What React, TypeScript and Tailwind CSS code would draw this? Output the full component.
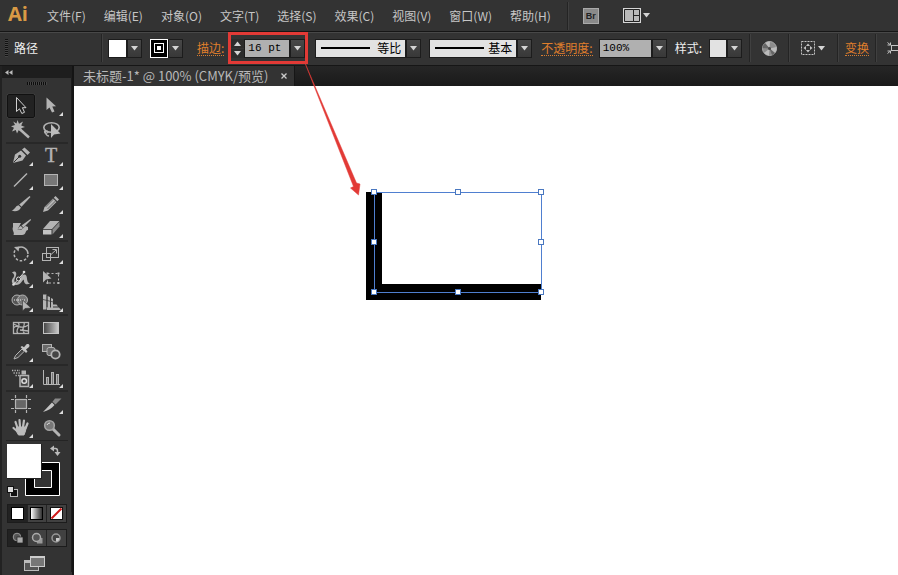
import type { ReactNode } from "react";

const menus = ["文件(F)", "编辑(E)", "对象(O)", "文字(T)", "选择(S)", "效果(C)", "视图(V)", "窗口(W)", "帮助(H)"];

const G = "#b4b4b4";

type Tool = { name: string; more?: boolean; active?: boolean; icon: ReactNode };

const cursor = "M0 0V12.5L3 10L5.500 15L8 14L5.800 9L9.500 8.800Z";

const groups: Tool[][] = [
  [
    {
      name: "选择工具",
      active: true,
      icon: <path d="M10.500 3.500V17.500L13.500 14.800L15.800 19.500L18.500 18.300L16.400 13.700H20Z" fill="#1f1f1f" stroke="#d0d0d0" />,
    },
    { name: "直接选择工具", more: true, icon: <path d={cursor} transform="translate(10.500 3.500)" fill={G} /> },
    {
      name: "魔棒工具",
      icon: (
        <g fill={G}>
          <path d="M11.500 2L13 5.800L17 3.600L15.200 7.500L19 9L15.200 10.200L16.500 14L12.800 12L11 15.500L9.800 12L6 13.500L8 9.800L5 8.200L9 7L7.200 3.600L10.500 5.600Z" />
          <path d="M13 10.500L23 19.500" stroke={G} strokeWidth="2.500" />
        </g>
      ),
    },
    {
      name: "套索工具",
      icon: (
        <g fill="none" stroke={G} strokeWidth="1.600">
          <ellipse cx="15.500" cy="9.500" rx="7.700" ry="4.800" />
          <path d="M9.500 12.500C7.500 14 9 16 11 15S11.500 12.500 10 13.500S10.500 18 13 18" strokeWidth="1.300" />
          <path d="M15 6V20L18 16.500L24.500 15.500Z" fill="#bcbcbc" stroke="none" />
        </g>
      ),
    },
  ],
  [
    {
      name: "钢笔工具",
      more: true,
      icon: (
        <g>
          <path d="M7 19L9 10.500L15 6.500L20 11.500L16.500 16.500Z" fill={G} />
          <path d="M16 5.500L18.500 3.500L24 8.500L21.500 11Z" fill={G} />
          <path d="M7.500 18.500L13 13" stroke="#333" />
          <circle cx="13.700" cy="12.300" r="1.500" fill="#333" />
        </g>
      ),
    },
    {
      name: "文字工具",
      more: true,
      icon: (
        <text x="15" y="18" textAnchor="middle" fontFamily="Liberation Serif, serif" fontSize="20" fill={G} stroke={G} strokeWidth="0.400">
          T
        </text>
      ),
    },
    { name: "直线段工具", more: true, icon: <path d="M8 18.500L21 5.500" stroke={G} strokeWidth="1.400" /> },
    { name: "矩形工具", more: true, icon: <rect x="8.500" y="6.500" width="13" height="11" fill="#777" stroke={G} /> },
    {
      name: "画笔工具",
      icon: (
        <g fill={G}>
          <path d="M23.500 4L13.200 12.500L15.500 14.800L24.500 5Z" />
          <path d="M12.500 13.200L14.900 15.500C14 19 9 20 5.500 18.500C9 18 9 14 12.500 13.200Z" />
        </g>
      ),
    },
    {
      name: "铅笔工具",
      more: true,
      icon: (
        <g fill={G}>
          <path d="M7 20L8.500 15L17 6.500L20.500 10L12 18.500Z" />
          <path d="M17.800 5.700L19.500 4L23 7.500L21.300 9.200Z" />
          <path d="M9.500 15L17.500 7M11.500 17L19.500 9" stroke="#666" />
        </g>
      ),
    },
    {
      name: "斑点画笔工具",
      icon: (
        <g fill={G}>
          <path d="M7 7H15L11.500 13.500L15 14L19.500 10L22 11V14C19 14 20.500 19 16 19H7.500C9 16.500 5.500 14 7 11Z" />
          <path d="M24.500 3L15.500 9.500L17.500 11.500L25 4Z" />
          <path d="M14.800 10L17 12C15.500 14 13 13.600 11 13.400C13 12.500 13 10.500 14.800 10Z" />
        </g>
      ),
    },
    {
      name: "橡皮擦工具",
      more: true,
      icon: (
        <g>
          <path d="M7 13L14 5H23.500L16 13Z" fill="#b4b4b4" />
          <path d="M7 13.800H15.500V18.500H7Z" fill="#c4c4c4" />
          <path d="M16.500 13.500L23.500 6V10.500L16.500 18.500Z" fill="#888" />
        </g>
      ),
    },
  ],
  [
    {
      name: "旋转工具",
      more: true,
      icon: (
        <g fill="none" stroke={G} strokeWidth="1.500">
          <path d="M12 5.800A7 7 0 0 1 22 12" />
          <path d="M22 13A7 7 0 1 1 10 7" strokeDasharray="2.500 1.800" />
          <path d="M8 5L13.500 4.500L12.500 9.500Z" fill={G} stroke="none" />
        </g>
      ),
    },
    {
      name: "比例缩放工具",
      more: true,
      icon: (
        <g fill="none" stroke={G}>
          <rect x="10.500" y="5.500" width="12" height="10" />
          <rect x="6.500" y="11.500" width="8" height="7" />
          <path d="M15 12.500L20 8M16.500 7.500H20.500V11.500" />
        </g>
      ),
    },
    {
      name: "宽度工具",
      more: true,
      icon: (
        <g fill="none" stroke={G}>
          <path d="M6 6.500C9.500 4 11.500 7 9.500 11C7.500 14.500 8 18 12 16C15 14 14 9 18 8.500C23 8.500 19 16 24 17.500C19 20 17.500 16 18 13.500C16 14 15 19 10 19C5 18.500 5 14 7.500 11.500C9 9.500 8 7.500 6 6.500Z" fill={G} stroke="none" />
          <path d="M8 18L18 6.500" stroke="#d8d8d8" />
          <circle cx="12.500" cy="13" r="2" fill="#333" stroke="#ddd" />
          <circle cx="18" cy="6" r="1.300" fill="#ddd" stroke="none" />
          <circle cx="7.500" cy="18.500" r="1.300" fill="#ddd" stroke="none" />
        </g>
      ),
    },
    {
      name: "自由变换工具",
      icon: (
        <g>
          <rect x="11.500" y="7.500" width="11" height="9.500" fill="none" stroke={G} strokeDasharray="2 2" />
          <path d="M10.500 6.500H12.500V8.500H10.500ZM21.500 6.500H23.500V8.500H21.500ZM21.500 16H23.500V18H21.500ZM10.500 16H12.500V18H10.500Z" fill={G} />
          <path d="M7 5V16.500L10 13.500L15.500 12.500Z" fill={G} />
        </g>
      ),
    },
    {
      name: "形状生成器工具",
      more: true,
      icon: (
        <g>
          <circle cx="11" cy="10" r="5" fill="#555" stroke={G} />
          <circle cx="16.500" cy="10" r="5" fill="#777" stroke={G} />
          <path d="M8 10H19" stroke="#eee" strokeDasharray="1 1" />
          <path d="M16.500 10V21L19 18.500L25 18Z" fill={G} stroke="#333" strokeWidth="0.600" />
        </g>
      ),
    },
    {
      name: "透视网格工具",
      more: true,
      icon: (
        <g fill={G}>
          <path d="M7 4.500H10.500V19.500H7Z" />
          <path d="M11.500 6L14 7V19.500H11.500ZM15 8L17 9V19.500H15Z" />
          <path d="M11 17.500H23L25 20H11ZM15 14.500H20.500L22 16.500H15Z" />
          <path d="M7 9.500L17.500 12M11 5V17M14.500 7V17" stroke="#333" strokeWidth="0.700" />
        </g>
      ),
    },
  ],
  [
    {
      name: "网格工具",
      icon: (
        <g fill="none" stroke={G} strokeWidth="1.300">
          <rect x="7.500" y="6.500" width="15" height="11" />
          <path d="M7.500 12C11 7 14 15 22.500 9M12 6.500C16 10 8 14 12 17.500M18 6.500C20 10 14 13 18.500 17.500M7.500 8L12 10M14 14L22.500 15" />
        </g>
      ),
    },
    {
      name: "渐变工具",
      icon: (
        <g>
          <linearGradient id="toolGradient">
            <stop offset="0" stopColor="#444" />
            <stop offset="1" stopColor="#ccc" />
          </linearGradient>
          <rect x="7.500" y="6.500" width="15" height="11" fill="url(#toolGradient)" stroke="#c4c4c4" />
        </g>
      ),
    },
    {
      name: "吸管工具",
      more: true,
      icon: (
        <g>
          <path d="M8 19L9.500 15.500L16 9L18.300 11.300L12 17.500Z" fill="#444" stroke={G} />
          <path d="M14.500 7L16 6L18 7.300L20.500 4.200C23 3 24.500 5.500 22.800 7.200L20 9.500L21.500 11.500L20 13Z" fill="#c4c4c4" />
        </g>
      ),
    },
    {
      name: "混合工具",
      icon: (
        <g stroke={G} fill="#6a6a6a">
          <rect x="6.500" y="4.500" width="9" height="7" />
          <rect x="11" y="7.500" width="8" height="8" rx="2" />
          <circle cx="19.500" cy="14.500" r="4.200" fill="#444" strokeWidth="1.800" />
        </g>
      ),
    },
  ],
  [
    {
      name: "符号喷枪工具",
      more: true,
      icon: (
        <g fill={G}>
          <path d="M14 9.500H22.500V20.500H14Z" fill="#444" stroke={G} strokeWidth="1.500" />
          <path d="M15.500 4.500H20V8.500H15.500Z" />
          <circle cx="18.200" cy="15" r="2.300" fill="none" stroke="#ddd" strokeWidth="1.500" />
          <path d="M6 4.500H14M7.500 7H14M9.500 9.500H13" stroke={G} strokeWidth="1.300" strokeDasharray="1.300 1.200" />
        </g>
      ),
    },
    {
      name: "柱形图工具",
      more: true,
      icon: (
        <g fill="#777" stroke={G}>
          <path d="M7.500 4V18.500H24" fill="none" />
          <rect x="10.500" y="11.500" width="2" height="7" />
          <rect x="15.500" y="6.500" width="2" height="12" />
          <rect x="20.500" y="8.500" width="2" height="10" />
        </g>
      ),
    },
  ],
  [
    {
      name: "画板工具",
      icon: (
        <g stroke={G} strokeWidth="1.200">
          <rect x="9.500" y="7.500" width="11" height="9" fill="#666" />
          <path d="M5 7.500H8M22 7.500H25M5 16.500H8M22 16.500H25M9.500 3V6M20.500 3V6M9.500 18V21M20.500 18V21" />
        </g>
      ),
    },
    {
      name: "切片工具",
      more: true,
      icon: (
        <g>
          <path d="M7 20L16 10.500L18.500 13C16 16.500 12 18.500 7 20Z" fill="#c4c4c4" />
          <path d="M16.500 9.800L19 6.500H25.500L19.500 12.500Z" fill="#8a8a8a" />
        </g>
      ),
    },
    {
      name: "抓手工具",
      more: true,
      icon: (
        <g fill="none" stroke="#bcbcbc" strokeWidth="2.200" strokeLinecap="round">
          <path d="M11.500 12L9.500 6M14 11L13.500 4M17 11L18 4.500M19.500 12.500L21.500 7.500M11 15L7.500 12" />
          <path d="M11 11H20L19.500 15L18 19H12.500L10.500 15.500Z" fill="#bcbcbc" strokeWidth="1" />
        </g>
      ),
    },
    {
      name: "缩放工具",
      icon: (
        <g>
          <path d="M17 13L23 19" stroke={G} strokeWidth="3" strokeLinecap="round" />
          <circle cx="13.500" cy="9.500" r="4.800" fill="#777" stroke="#a4a4a4" strokeWidth="1.600" />
          <path d="M11 9A3 3 0 0 1 14 7" fill="none" stroke="#ddd" />
        </g>
      ),
    },
  ],
];

function ToolButton({ tool }: { tool: Tool }) {
  return (
    <button
      type="button"
      aria-label={tool.name}
      className={
        tool.active
          ? "mx-px h-6 rounded-xs border border-[#111] bg-[#222] shadow-[0_0_1px_#666]"
          : "mx-px h-6 border border-transparent"
      }
    >
      <svg viewBox="2 1 26 22" className="block h-[22px] w-[26px]" fill="none">
        {tool.icon}
        {tool.more && <path d="M27 18V22H23Z" fill="#ddd" />}
      </svg>
    </button>
  );
}

function Triangle() {
  return (
    <svg viewBox="0 0 7 5" className="h-[5px] w-[7px] shrink-0">
      <path d="M0 0H7L3.500 4.500Z" fill="#d4d4d4" />
    </svg>
  );
}

function DropButton({ label }: { label: string }) {
  return (
    <button
      type="button"
      aria-label={label}
      className="flex h-[19px] w-[15px] shrink-0 items-center justify-center border border-[#1c1c1c] bg-linear-to-b from-[#484848] to-[#383838]"
    >
      <Triangle />
    </button>
  );
}

function Divider() {
  return <div className="h-7 w-[2px] shrink-0 border-r border-l border-r-[#404040] border-l-[#242424]" />;
}

const linkStyle = "shrink-0 border-b border-dotted border-[#d67c30] text-xs leading-[15px] text-[#e07f2c]";

function StrokeSelect({ label, value, width }: { label: string; value: string; width: string }) {
  return (
    <div className="flex shrink-0 items-center">
      <div className={`relative h-[19px] ${width} border border-[#1c1c1c] bg-[#e2e2e2]`}>
        <select
          aria-label={label}
          defaultValue={value}
          className="block h-full w-full appearance-none pr-1 text-right text-xs leading-4 text-black [text-align-last:right]"
        >
          <option>{value}</option>
        </select>
        <div className="pointer-events-none absolute top-[7px] left-[5px] h-[2px] w-[49px] bg-black" />
      </div>
      <DropButton label={label + "选项"} />
    </div>
  );
}

function MenuBar() {
  return (
    <header className="flex h-[31px] shrink-0 items-center overflow-hidden bg-[#333]">
      <div className="w-[47px] shrink-0 pb-1 pl-2 font-['Open_Sans',sans-serif] text-xl leading-6 font-bold text-[#d99a45]">Ai</div>
      <nav className="flex gap-[18px]">
        {menus.map((m) => (
          <button key={m} type="button" className="shrink-0 text-xs leading-5 text-[#c6c6c6]">
            {m}
          </button>
        ))}
      </nav>
      <div className="ml-4 flex shrink-0 items-center">
        <Divider />
        <button
          type="button"
          aria-label="Bridge"
          className="ml-3.5 flex h-4 w-4 items-center justify-center border border-[#aaa] bg-[#8a8a8a] font-['Liberation_Sans',sans-serif] text-[9px] leading-3 font-bold text-[#222]"
        >
          Br
        </button>
        <button type="button" aria-label="排列文档" className="ml-6 flex items-center gap-[2px]">
          <svg viewBox="0 0 18 15" className="h-[15px] w-[18px]">
            <rect width="18" height="15" fill="#d6d6d6" />
            <path d="M1.500 1.500H10.500V13.500H1.500ZM10.500 1.500H16.500V7.500H10.500ZM10.500 7.500H16.500V13.500H10.500Z" fill="#b8b8b8" stroke="#222" />
          </svg>
          <Triangle />
        </button>
      </div>
    </header>
  );
}

function ControlBar() {
  return (
    <section className="flex h-[34px] shrink-0 items-center overflow-hidden border-t border-[#161616] bg-[#333] pb-px shadow-[inset_0_1px_0_#484848]">
      <div className="ml-[5px] h-[18px] w-[3px] shrink-0 bg-[repeating-linear-gradient(to_bottom,#111_0_1px,#444_1px_2px)]" />
      <div className="ml-1.5 w-[87px] shrink-0 text-xs text-[#eee]">路径</div>
      <Divider />
      <div className="ml-[5px] flex shrink-0">
        <button type="button" aria-label="填色" className="h-[19px] w-[19px] border border-[#1c1c1c] bg-white" />
        <DropButton label="填色选项" />
      </div>
      <div className="ml-2 flex shrink-0">
        <button type="button" aria-label="描边颜色" className="flex h-[19px] w-[18px] items-center justify-center border border-white bg-black">
          <span className="block h-[10px] w-[10px] border border-white bg-black p-[2px]">
            <span className="block h-full w-full bg-white" />
          </span>
        </button>
        <DropButton label="描边颜色选项" />
      </div>
      <label htmlFor="weight" className={`ml-3.5 ${linkStyle}`}>
        描边:
      </label>
      <div className="ml-1 flex h-8 shrink-0 items-center border-3 border-[#e23a36]">
        <div className="flex flex-col gap-px">
          <button type="button" aria-label="增加" className="flex h-[9px] w-[13px] rotate-180 items-center justify-center bg-[#2c2c2c]">
            <Triangle />
          </button>
          <button type="button" aria-label="减少" className="flex h-[9px] w-[13px] items-center justify-center bg-[#2c2c2c]">
            <Triangle />
          </button>
        </div>
        <input
          id="weight"
          defaultValue="16 pt"
          className="h-[19px] w-[46px] border border-[#1c1c1c] bg-[#b0b0b0] pl-[3px] font-['Liberation_Mono',monospace] text-[11px] leading-4 text-black"
        />
        <DropButton label="描边粗细选项" />
      </div>
      <div className="ml-[7px] flex shrink-0 gap-2">
        <StrokeSelect label="变量宽度配置文件" value="等比" width="w-[91px]" />
        <StrokeSelect label="画笔定义" value="基本" width="w-[88px]" />
      </div>
      <label htmlFor="opacity" className={`ml-[9px] ${linkStyle}`}>
        不透明度:
      </label>
      <div className="ml-1.5 flex shrink-0">
        <input
          id="opacity"
          defaultValue="100%"
          className="h-[19px] w-[53px] border border-[#1c1c1c] bg-[#b0b0b0] pl-[3px] font-['Liberation_Mono',monospace] text-[11px] leading-4 text-black"
        />
        <DropButton label="不透明度选项" />
      </div>
      <div className="ml-2 shrink-0 text-xs text-[#eee]">样式:</div>
      <div className="ml-[7px] flex shrink-0">
        <button type="button" aria-label="图形样式" className="h-[19px] w-[18px] border border-[#1c1c1c] bg-[#e2e2e2]" />
        <DropButton label="图形样式选项" />
      </div>
      <div className="ml-[7px] flex shrink-0 items-center">
        <Divider />
        <button type="button" aria-label="重新着色图稿" className="mx-[11px]">
          <svg viewBox="0 0 15 15" className="block h-[15px] w-[15px]">
            <circle cx="7.500" cy="7.500" r="7" fill="#8c8c8c" stroke="#aaa" />
            <path d="M7.500 7.500L3 2A7 7 0 0 1 8 .5ZM7.500 7.500L14.500 6A7 7 0 0 1 13 12ZM7.500 7.500L7 14.500A7 7 0 0 1 2 12Z" fill="#bbb" />
            <path d="M7.500 7.500L.5 7A7 7 0 0 1 3 2ZM7.500 7.500L13 12A7 7 0 0 1 10 14Z" fill="#666" />
            <circle cx="7.500" cy="7.500" r="1.500" fill="#444" />
          </svg>
        </button>
        <Divider />
        <button type="button" aria-label="选择类似的对象" className="mr-3 ml-[11px] flex items-center gap-[3px]">
          <svg viewBox="0 0 14 14" className="h-3.5 w-3.5" fill="none">
            <rect x=".5" y=".5" width="13" height="13" stroke="#c4c4c4" strokeDasharray="2 1" />
            <path d="M7 2.500L9 5H5ZM7 11.500L9 9H5ZM2.500 7L5 5V9ZM11.500 7L9 5V9Z" fill="#c4c4c4" />
            <rect x="5.500" y="5.500" width="3" height="3" fill="#333" />
          </svg>
          <Triangle />
        </button>
        <Divider />
        <a href="#transform" className={`mx-1.5 ${linkStyle}`}>
          变换
        </a>
        <Divider />
        <button type="button" aria-label="隔离选中的对象" className="ml-2.5">
          <svg viewBox="0 0 16 14" className="block h-3.5 w-4" fill="none" stroke="#c4c4c4">
            <rect x="4.500" y="4.500" width="8" height="5" />
            <path d="M.5 1.500L3.500 4M15.500 1.500L12.500 4M.5 12.500L3.500 10M15.500 12.500L12.500 10M3.500 1.500V4H.5M12.500 1.500V4H15.500M3.500 12.500V10H.5M12.500 12.500V10H15.500" />
          </svg>
        </button>
      </div>
    </section>
  );
}

function ColorControls() {
  return (
    <div className="border-t border-[#242424] px-px pt-[3px]">
      <svg viewBox="0 0 56 56" className="block h-[56px] w-[56px]" role="img" aria-label="填色和描边">
        <path d="M18.500 18.500H52.500V51.500H18.500Z" fill="#000" stroke="#fff" />
        <path d="M27.500 26.500H44.500V43.500H27.500Z" fill="#333" stroke="#fff" />
        <rect x="-1" y="-1" width="36" height="36" fill="#222" />
        <rect width="34" height="34" fill="#fff" />
        <path d="M45.500 4.500H48.500Q50.500 4.500 50.500 7V9" fill="none" stroke="#bbb" strokeWidth="1.500" />
        <path d="M43 4.500L47 1.500V7.500ZM50.500 12L47.500 8H53.500Z" fill="#bbb" />
        <rect x="3.500" y="45.500" width="7" height="7" fill="#111" stroke="#bbb" />
        <rect x=".5" y="42.500" width="6" height="6" fill="#ddd" stroke="#111" />
      </svg>
      <div className="mt-1 grid h-[19px] w-[60px] grid-cols-3 border border-[#1c1c1c] bg-[#414141]">
        <button type="button" aria-label="颜色" className="flex items-center justify-center bg-[#222]">
          <span className="block h-[13px] w-[13px] border border-black bg-white" />
        </button>
        <button type="button" aria-label="渐变" className="flex items-center justify-center border-x border-[#242424]">
          <span className="block h-[13px] w-[13px] border border-black bg-linear-to-r from-white to-[#333]" />
        </button>
        <button type="button" aria-label="无" className="flex items-center justify-center">
          <svg viewBox="0 0 13 13" className="h-[13px] w-[13px]">
            <rect x=".5" y=".5" width="12" height="12" fill="#fff" stroke="#111" />
            <path d="M1.500 11.500L11.500 1.500" stroke="#d01818" strokeWidth="2" />
          </svg>
        </button>
      </div>
      <div className="mt-1.5 grid h-[18px] w-[60px] grid-cols-3 border border-[#1c1c1c] bg-[#414141]">
        <button type="button" aria-label="正常绘图" className="flex items-center justify-center bg-[#222]">
          <svg viewBox="0 0 12 12" className="h-3 w-3">
            <circle cx="5" cy="5" r="3.800" fill="#555" stroke="#999" />
            <rect x="5" y="5" width="6" height="6" fill="#aaa" stroke="#222" strokeWidth=".7" />
          </svg>
        </button>
        <button type="button" aria-label="背面绘图" className="flex items-center justify-center border-x border-[#242424]">
          <svg viewBox="0 0 12 12" className="h-3 w-3">
            <rect x="6" y="6" width="5.500" height="5.500" fill="#999" />
            <circle cx="5.500" cy="5.500" r="4" fill="#555" stroke="#aaa" strokeWidth="1.500" />
          </svg>
        </button>
        <button type="button" aria-label="内部绘图" className="flex items-center justify-center">
          <svg viewBox="0 0 12 12" className="h-3 w-3">
            <circle cx="6" cy="6" r="4" fill="#444" stroke="#999" strokeWidth="1.500" />
            <path d="M6 6H9.500A3.500 3.500 0 0 1 6 9.500Z" fill="#ccc" />
          </svg>
        </button>
      </div>
      <button type="button" aria-label="更改屏幕模式" className="mt-2 ml-[17px] block">
        <svg viewBox="0 0 22 17" className="block h-[17px] w-[22px]">
          <rect x=".5" y="5.500" width="14" height="10" fill="#555" stroke="#bbb" />
          <path d="M0 5H15V8H0Z" fill="#bbb" />
          <rect x="6.500" y="1.500" width="14" height="10" fill="#777" stroke="#ccc" />
          <path d="M6 1H21V3H6Z" fill="#ccc" />
        </svg>
      </button>
    </div>
  );
}

function ToolPanel() {
  return (
    <aside className="w-[74px] shrink-0 border-r-2 border-l-2 border-r-[#141414] border-l-[#222] bg-[#333]">
      <div className="flex h-3 items-center bg-[#1e1e1e] pl-[3px]">
        <svg viewBox="0 0 8 5" className="h-[5px] w-2">
          <path d="M3.500 0V5L0 2.500ZM7.500 0V5L4 2.500Z" fill="#bbb" />
        </svg>
      </div>
      <div className="flex h-4 justify-center border-r border-[#1c1c1c] pt-1">
        <div className="h-[3px] w-5 bg-[repeating-linear-gradient(to_right,#0c0c0c_0_1px,#444_1px_2px)]" />
      </div>
      <div className="border-r border-[#1c1c1c] pl-1">
        <div className="w-[62px]">
          {groups.map((group, i) => (
            <div
              key={i}
              className={
                i === 0 ? "grid grid-cols-[30px_30px]" : "grid grid-cols-[30px_30px] border-t-2 border-[#282828]"
              }
            >
              {group.map((tool) => (
                <ToolButton key={tool.name} tool={tool} />
              ))}
            </div>
          ))}
          <ColorControls />
        </div>
      </div>
    </aside>
  );
}

function Artwork() {
  const handles = [
    [14, 6], [98, 6], [181, 6],
    [14, 56], [181, 56],
    [14, 106], [98, 106], [181, 106],
  ];
  return (
    <svg viewBox="0 0 190 120" className="absolute top-[100px] left-[286px] h-[120px] w-[190px]" role="img" aria-label="选中的路径">
      <path d="M6 6H22V98H181V114H6Z" fill="#000" />
      <rect x="14.500" y="6.500" width="167" height="100" fill="none" stroke="#4f7fd0" />
      {handles.map(([x, y]) => (
        <rect key={`${x}-${y}`} x={x - 2.5} y={y - 2.5} width="5" height="5" fill="#fff" stroke="#4a78c0" />
      ))}
    </svg>
  );
}

export default function App() {
  return (
    <div className="relative flex min-h-screen flex-col overflow-hidden bg-[#333] font-['Noto_Sans_CJK_SC',sans-serif]">
      <MenuBar />
      <ControlBar />
      <div className="flex flex-1 border-t border-[#161616]">
        <ToolPanel />
        <div className="flex min-w-0 flex-1 flex-col">
          <div className="flex h-5 shrink-0 items-stretch bg-linear-to-b from-[#262626] to-[#1a1a1a]">
            <div className="flex w-[221px] items-center border-r border-[#161616] bg-[#333] pl-[9px] text-[13px] leading-5 text-[#b8b8b8]">
              <span className="whitespace-nowrap">未标题-1* @ 100% (CMYK/预览)</span>
              <button type="button" aria-label="关闭" className="mr-[7px] ml-auto">
                <svg viewBox="0 0 6 6" className="h-1.5 w-1.5">
                  <path d="M.5 .5L5.500 5.500M5.500 .5L.5 5.500" stroke="#ccc" strokeWidth="1.300" />
                </svg>
              </button>
            </div>
          </div>
          <main className="relative flex-1 bg-white">
            <Artwork />
          </main>
        </div>
      </div>
      <svg viewBox="0 0 60 134" className="pointer-events-none absolute top-[62px] left-[303px] h-[134px] w-[60px]" aria-hidden="true">
        <path d="M2 1L53.500 121L57 122L55.500 133L47.500 126L50.500 124.500Z" fill="#e23a36" stroke="#e23a36" strokeWidth=".5" />
      </svg>
    </div>
  );
}
